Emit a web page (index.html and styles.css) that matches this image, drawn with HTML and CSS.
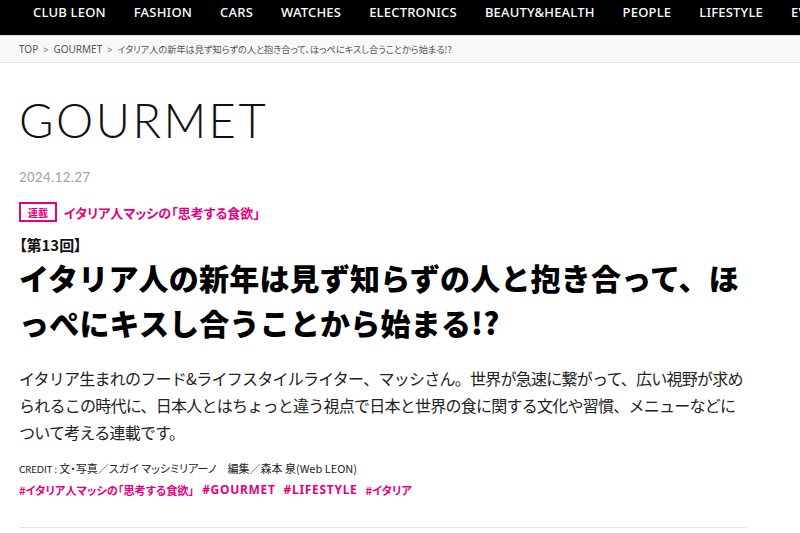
FILE: index.html
```html
<!DOCTYPE html>
<html lang="ja">
<head>
<meta charset="utf-8">
<title>GOURMET | LEON</title>
<link rel="stylesheet" href="styles.css">
</head>
<body>
<nav class="gnav">
  <ul class="gnav-list">
    <li>CLUB LEON</li>
    <li>FASHION</li>
    <li>CARS</li>
    <li>WATCHES</li>
    <li>ELECTRONICS</li>
    <li>BEAUTY&amp;HEALTH</li>
    <li>PEOPLE</li>
    <li>LIFESTYLE</li>
    <li>EV</li>
  </ul>
</nav>
<div class="crumbs">
  <span>TOP</span><span class="sep">&gt;</span><span>GOURMET</span><span class="sep">&gt;</span><span class="crumb-jp">イタリア人の新年は見ず知らずの人と抱き合って、ほっぺにキスし合うことから始まる!?</span>
</div>
<main class="article">
  <h2 class="cat">GOURMET</h2>
  <div class="date">2024.12.27</div>
  <div class="series">
    <span class="series-badge">連載</span>
    <span class="series-name">イタリア人マッシの「思考する食欲」</span>
  </div>
  <div class="episode">【第13回】</div>
  <h1 class="title">イタリア人の新年は見ず知らずの人と抱き合って、ほっぺにキスし合うことから始まる!?</h1>
  <p class="lead">イタリア生まれのフード&amp;ライフスタイルライター、マッシさん。世界が急速に繋がって、広い視野が求められるこの時代に、日本人とはちょっと違う視点で日本と世界の食に関する文化や習慣、メニューなどについて考える連載です。</p>
  <div class="credit"><span class="credit-label">CREDIT :</span> 文・写真／スガイ マッシミリアーノ　編集／森本 泉(Web LEON)</div>
  <div class="tags">
    <span>#イタリア人マッシの「思考する食欲」</span>
    <span class="tag-latin">#GOURMET</span>
    <span class="tag-latin">#LIFESTYLE</span>
    <span>#イタリア</span>
  </div>
  <hr class="rule">
</main>
</body>
</html>
```

FILE: styles.css
```css
* { box-sizing: border-box; }
html, body { margin: 0; padding: 0; }
body {
  background: #fff;
  color: #111;
  font-family: "Noto Sans", "Noto Sans CJK JP", sans-serif;
  overflow: hidden;
  width: 800px;
}
.gnav {
  background: #000;
  height: 35px;
  overflow: hidden;
}
.gnav-list {
  list-style: none;
  margin: 0;
  padding: 3px 0 0 33px;
  display: flex;
  gap: 28px;
  white-space: nowrap;
}
.gnav-list li {
  color: #fff;
  font-family: "Noto Sans", sans-serif;
  font-weight: 500;
  font-size: 13px;
  line-height: 18px;
  letter-spacing: 0.2px;
}
.crumbs {
  background: #f8f8f8;
  border-top: 1px solid #ddd;
  border-bottom: 1px solid #e6e6e6;
  height: 28px;
  padding: 0 0 0 19px;
  display: flex;
  align-items: center;
  font-size: 10px;
  color: #555;
  white-space: nowrap;
}
.crumbs .sep { margin: 0 5px; font-size: 9px; color: #666; }
.crumb-jp {
  font-family: "Noto Sans CJK JP", sans-serif;
  font-size: 9.2px;
  font-feature-settings: "palt";
}
.article {
  padding: 0 54px 0 19px;
}
.cat {
  margin: 27px 0 0;
  font-family: "Lato", sans-serif;
  font-weight: 300;
  font-size: 47px;
  line-height: 60px;
  letter-spacing: 2.5px;
  color: #111;
}
.date {
  margin-top: 19px;
  font-family: "Lato", sans-serif;
  font-size: 13px;
  letter-spacing: 0.5px;
  color: #a0a0a0;
  line-height: 16px;
}
.series {
  margin-top: 17px;
  display: flex;
  align-items: center;
  gap: 7px;
}
.series-badge {
  border: 2px solid #e4007f;
  color: #e4007f;
  font-family: "Noto Sans CJK JP", sans-serif;
  font-weight: 700;
  font-size: 10px;
  width: 38px;
  height: 20px;
  display: flex;
  align-items: center;
  justify-content: center;
}
.series-name {
  color: #e4007f;
  font-family: "Noto Sans CJK JP", sans-serif;
  font-weight: 700;
  font-size: 13px;
  font-feature-settings: "palt";
}
.episode {
  margin-top: 13px;
  font-family: "Noto Sans CJK JP", sans-serif;
  font-weight: 700;
  font-size: 15px;
  line-height: 20px;
  font-feature-settings: "palt";
}
.title {
  margin: 0;
  font-family: "Noto Sans CJK JP", sans-serif;
  font-weight: 900;
  font-size: 30px;
  line-height: 45px;
  letter-spacing: 0.2px;
  color: #000;
}
.lead {
  margin: 20px 0 0;
  font-family: "Noto Sans CJK JP", sans-serif;
  font-size: 16px;
  letter-spacing: -0.75px;
  line-height: 27px;
  color: #222;
}
.credit {
  margin-top: 12px;
  font-family: "Noto Sans CJK JP", sans-serif;
  font-size: 11px;
  line-height: 20px;
  color: #222;
  font-feature-settings: "palt";
}
.credit-label { font-family: "Lato", sans-serif; font-size: 9.5px; }
.tags {
  margin-top: 0;
  display: flex;
  gap: 8px;
  font-family: "Noto Sans CJK JP", sans-serif;
  font-weight: 700;
  font-size: 11.2px;
  line-height: 20px;
  color: #e4007f;
  font-feature-settings: "palt";
}
.tag-latin {
  font-family: "Noto Sans", sans-serif;
  font-size: 12px;
  letter-spacing: 0.7px;
}
.rule {
  margin: 27px 0 0;
  border: 0;
  border-top: 1px solid #e6e6e6;
}
```
